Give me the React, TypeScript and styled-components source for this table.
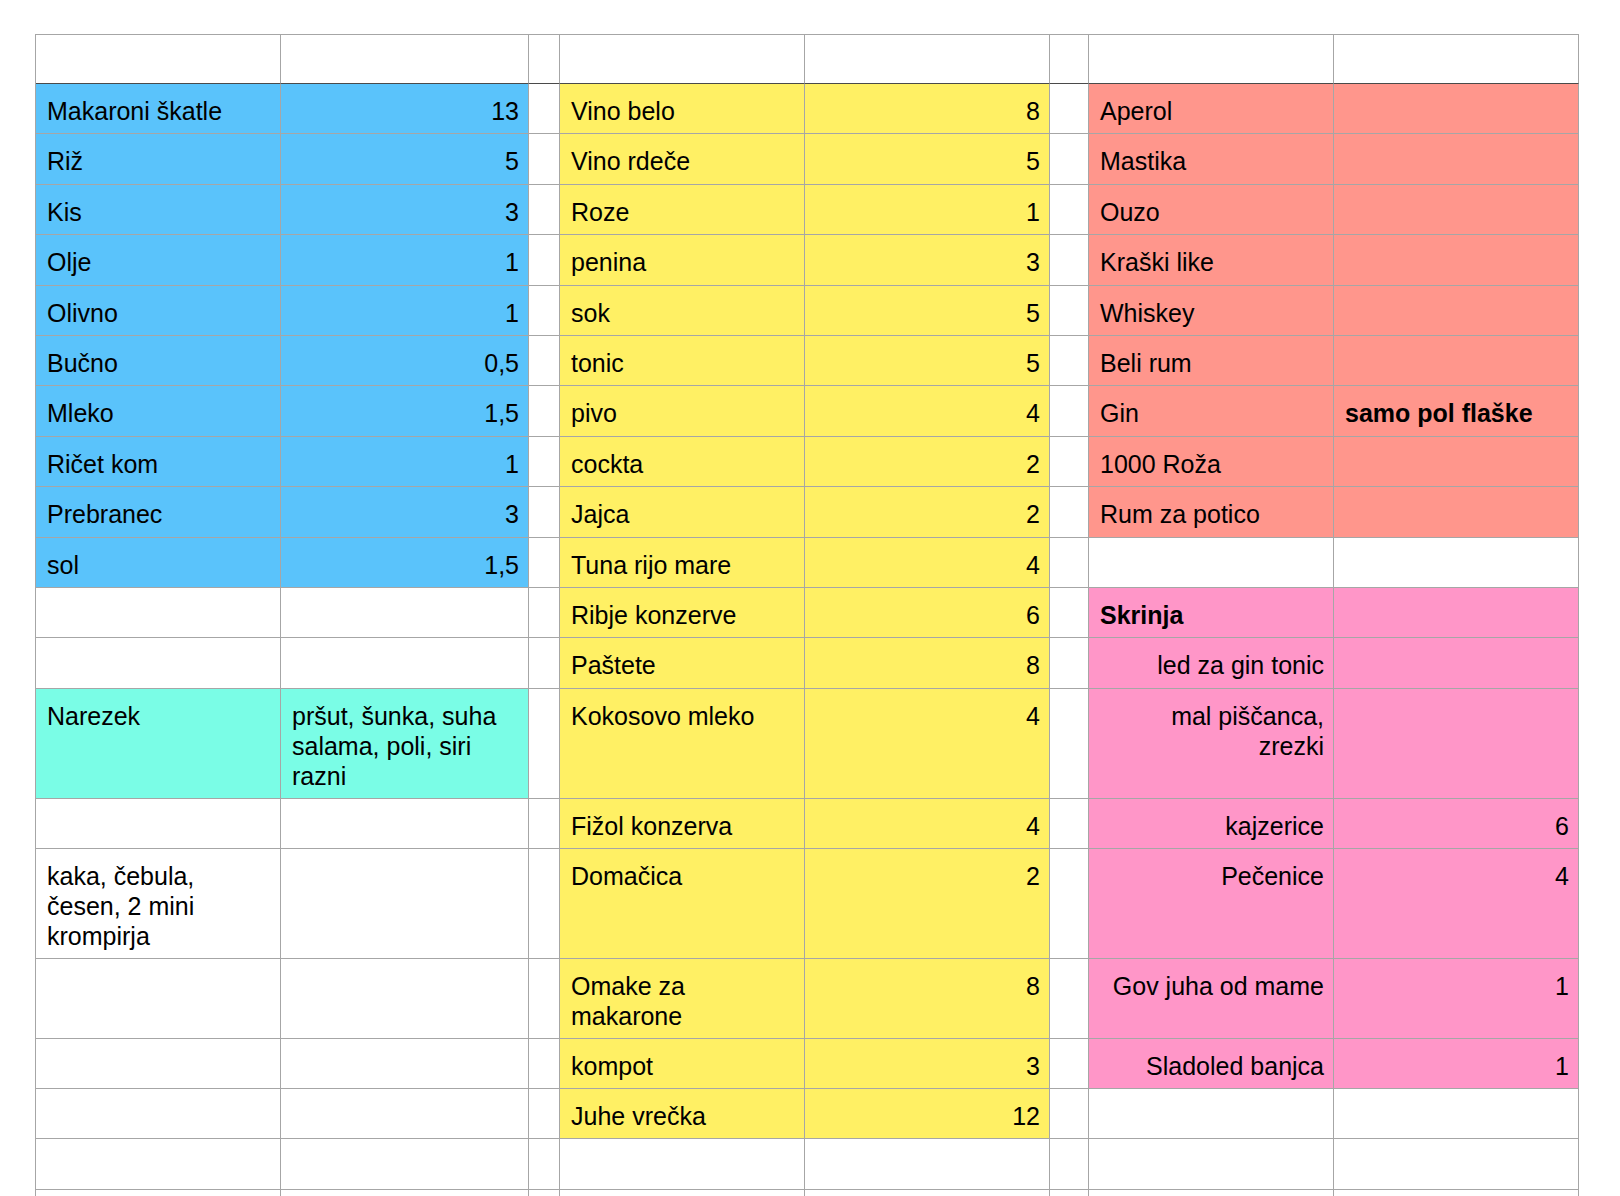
import styled, { createGlobalStyle } from "styled-components";

const GlobalStyle = createGlobalStyle`
  html, body {
    margin: 0;
    height: 100%;
    overflow: hidden;
    background: #ffffff;
  }
  body {
    font-family: "Liberation Sans", Arial, Helvetica, sans-serif;
    color: #000000;
  }
`

const fills: Record<string, string> = {
  b: "#5ac3fb",
  y: "#fff064",
  s: "#ff968c",
  p: "#ff96c8",
  c: "#7afde6",
  w: "#ffffff",
};

const COLS = "245px 248px 31px 245px 245px 39px 245px 245px";

const Page = styled.div`
  padding: 34px 0 0 35px;
`
const Sheet = styled.div`
  display: flex;
  flex-direction: column;
  width: max-content;
  border-top: 1px solid #a6a6a6;
  border-left: 1px solid #a6a6a6;
`
const Row = styled.div<{ $h: number }>`
  display: grid;
  grid-template-columns: ${COLS};
  height: ${p => p.$h}px;
  flex-shrink: 0;
`
const Cell = styled.div<{ $bg: string; $right?: boolean; $bold?: boolean; $head?: boolean }>`
  box-sizing: border-box;
  background: ${p => p.$bg};
  border-right: 1px solid #a6a6a6;
  border-bottom: 1px solid ${p => p.$head ? "#4a4a4a" : "#a6a6a6"};
  padding: 12px 9px 0 11px;
  font-size: 25px;
  line-height: 30px;
  font-weight: ${p => p.$bold ? 700 : 400};
  text-align: ${p => p.$right ? "right" : "left"};
  white-space: pre-line;
  overflow: hidden;
`

interface CellData {
  t?: string;
  f: string;
  r?: boolean;
  bold?: boolean;
}

// shorthand: fill letter, text, right aligned
const L = (f: string, t = ""): CellData => ({ f, t });
const R = (f: string, t = ""): CellData => ({ f, t, r: true });
const B = (f: string, t: string): CellData => ({ f, t, bold: true });
const W = L("w");

const S = 50.4;

const rows: { h: number; cells: CellData[] }[] = [
  { h: S, cells: [L("b", "Makaroni škatle"), R("b", "13"), W, L("y", "Vino belo"), R("y", "8"), W, L("s", "Aperol"), L("s")] },
  { h: S, cells: [L("b", "Riž"), R("b", "5"), W, L("y", "Vino rdeče"), R("y", "5"), W, L("s", "Mastika"), L("s")] },
  { h: S, cells: [L("b", "Kis"), R("b", "3"), W, L("y", "Roze"), R("y", "1"), W, L("s", "Ouzo"), L("s")] },
  { h: S, cells: [L("b", "Olje"), R("b", "1"), W, L("y", "penina"), R("y", "3"), W, L("s", "Kraški like"), L("s")] },
  { h: S, cells: [L("b", "Olivno"), R("b", "1"), W, L("y", "sok"), R("y", "5"), W, L("s", "Whiskey"), L("s")] },
  { h: S, cells: [L("b", "Bučno"), R("b", "0,5"), W, L("y", "tonic"), R("y", "5"), W, L("s", "Beli rum"), L("s")] },
  { h: S, cells: [L("b", "Mleko"), R("b", "1,5"), W, L("y", "pivo"), R("y", "4"), W, L("s", "Gin"), B("s", "samo pol flaške")] },
  { h: S, cells: [L("b", "Ričet kom"), R("b", "1"), W, L("y", "cockta"), R("y", "2"), W, L("s", "1000 Roža"), L("s")] },
  { h: S, cells: [L("b", "Prebranec"), R("b", "3"), W, L("y", "Jajca"), R("y", "2"), W, L("s", "Rum za potico"), L("s")] },
  { h: S, cells: [L("b", "sol"), R("b", "1,5"), W, L("y", "Tuna rijo mare"), R("y", "4"), W, W, W] },
  { h: S, cells: [W, W, W, L("y", "Ribje konzerve"), R("y", "6"), W, B("p", "Skrinja"), L("p")] },
  { h: S, cells: [W, W, W, L("y", "Paštete"), R("y", "8"), W, R("p", "led za gin tonic"), L("p")] },
  { h: 110, cells: [L("c", "Narezek"), L("c", "pršut, šunka, suha\nsalama, poli, siri\nrazni"), W, L("y", "Kokosovo mleko"), R("y", "4"), W, R("p", "mal piščanca,\nzrezki"), L("p")] },
  { h: S, cells: [W, W, W, L("y", "Fižol konzerva"), R("y", "4"), W, R("p", "kajzerice"), R("p", "6")] },
  { h: 110, cells: [L("w", "kaka, čebula,\nčesen, 2 mini\nkrompirja"), W, W, L("y", "Domačica"), R("y", "2"), W, R("p", "Pečenice"), R("p", "4")] },
  { h: 79.5, cells: [W, W, W, L("y", "Omake za\nmakarone"), R("y", "8"), W, R("p", "Gov juha od mame"), R("p", "1")] },
  { h: S, cells: [W, W, W, L("y", "kompot"), R("y", "3"), W, R("p", "Sladoled banjca"), R("p", "1")] },
  { h: S, cells: [W, W, W, L("y", "Juhe vrečka"), R("y", "12"), W, W, W] },
  { h: S, cells: [W, W, W, W, W, W, W, W] },
  { h: S, cells: [W, W, W, W, W, W, W, W] },
];

export default function App() {
  return (
    <Page>
      <GlobalStyle />
      <Sheet>
        <Row $h={49}>
          {Array.from({ length: 8 }).map((_, i) => (
            <Cell key={i} $bg="#ffffff" $head />
          ))}
        </Row>
        {rows.map((row, ri) => (
          <Row key={ri} $h={row.h}>
            {row.cells.map((c, ci) => (
              <Cell key={ci} $bg={fills[c.f]} $right={c.r} $bold={c.bold}>
                {c.t}
              </Cell>
            ))}
          </Row>
        ))}
      </Sheet>
    </Page>
  );
}
